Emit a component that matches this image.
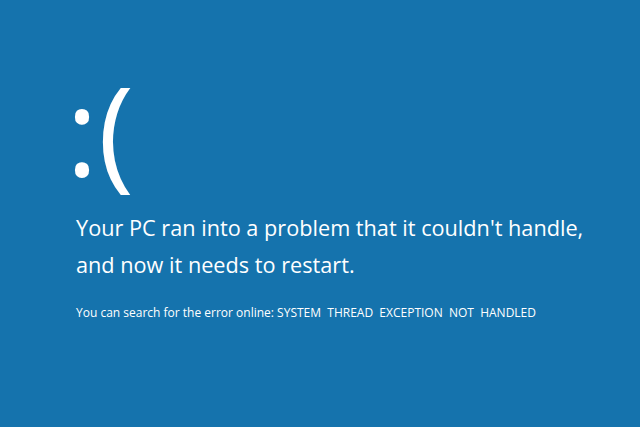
export default function App() {
  return (
    <div className="w-[640px] h-[427px] bg-[#1573ad] text-white overflow-hidden" style={{ fontFamily: '"Open Sans", "Noto Sans", sans-serif' }}>
      <div className="pl-[66px] pt-[54px]">
        <div className="text-[122px] leading-[150px] font-normal h-[150px]">:(</div>
        <div className="pl-[10px] mt-[5px] text-[21.7px] leading-[37px]">
          <p>Your PC ran into a problem that it couldn't handle,</p>
          <p>and now it needs to restart.</p>
        </div>
        <p className="pl-[10px] mt-[22px] text-[12px] leading-[16px]">
          You can search for the error online: SYSTEM&nbsp; THREAD&nbsp; EXCEPTION&nbsp; NOT&nbsp; HANDLED
        </p>
      </div>
    </div>
  );
}
